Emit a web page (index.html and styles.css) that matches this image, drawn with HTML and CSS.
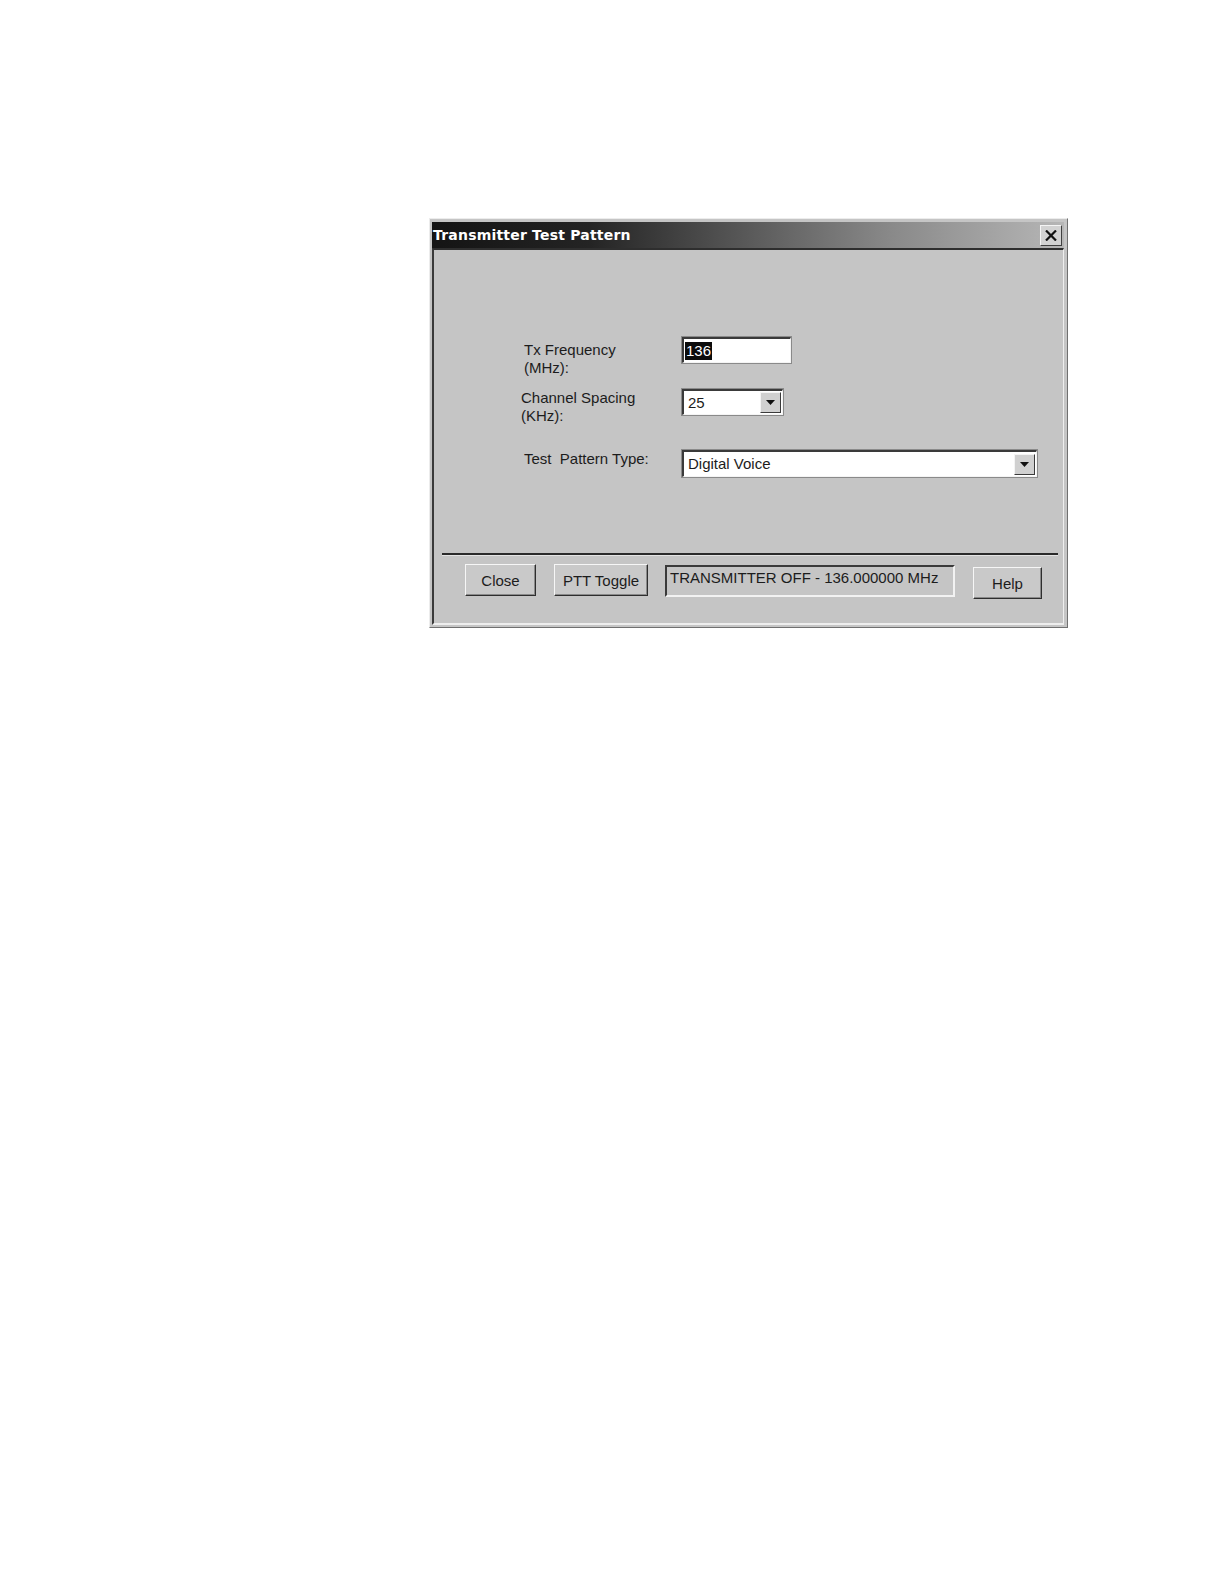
FILE: index.html
```html
<!DOCTYPE html>
<html>
<head>
<meta charset="utf-8">
<title>Transmitter Test Pattern</title>
<link rel="stylesheet" href="styles.css">
</head>
<body>
<div class="dialog">
  <div class="titlebar">
    <span class="title">Transmitter Test Pattern</span>
    <span class="xbtn"><svg width="12" height="11" viewBox="0 0 12 11"><path d="M1 0.5 L11 10.5 M11 0.5 L1 10.5" stroke="#111" stroke-width="2.2"/></svg></span>
  </div>
  <div class="body">
    <div class="form">
      <div class="row row1">
        <div class="label pad">Tx Frequency<br>(MHz):</div>
        <div class="field short"><span class="sel">136</span></div>
      </div>
      <div class="row row2">
        <div class="label">Channel Spacing<br>(KHz):</div>
        <div class="field combo small"><span class="val">25</span><span class="drop"><svg width="9" height="5" viewBox="0 0 9 5"><path d="M0 0 H9 L4.5 5 Z" fill="#111"/></svg></span></div>
      </div>
      <div class="row row3">
        <div class="label pad single">Test&nbsp; Pattern Type:</div>
        <div class="field combo wide"><span class="val">Digital Voice</span><span class="drop"><svg width="9" height="5" viewBox="0 0 9 5"><path d="M0 0 H9 L4.5 5 Z" fill="#111"/></svg></span></div>
      </div>
    </div>
    <div class="sep"></div>
    <div class="buttons">
      <div class="btn b-close">Close</div>
      <div class="btn b-ptt">PTT Toggle</div>
      <div class="status">TRANSMITTER OFF - 136.000000 MHz</div>
      <div class="btn b-help">Help</div>
    </div>
  </div>
</div>
</body>
</html>
```

FILE: styles.css
```css
html, body {
  margin: 0;
  padding: 0;
  background: #ffffff;
}
body {
  font-family: "Liberation Sans", Arial, sans-serif;
  padding-top: 218px;
  padding-left: 429px;
}
.dialog {
  width: 639px;
  height: 410px;
  box-sizing: border-box;
  background: #c5c5c5;
  border: 1px solid;
  border-color: #ececec #707070 #707070 #ececec;
  padding: 3px 3px 2px 2px;
  display: flex;
  flex-direction: column;
}
.titlebar {
  height: 26px;
  flex: none;
  background: linear-gradient(90deg, #141414 0%, #242424 25%, #555 48%, #888 72%, #b6b6b6 100%);
  display: flex;
  align-items: center;
  justify-content: space-between;
  padding: 0 2px 0 1px;
}
.title {
  color: #ffffff;
  font-family: "DejaVu Sans", Verdana, sans-serif;
  font-weight: bold;
  font-size: 14px;
  letter-spacing: 0.2px;
}
.xbtn {
  width: 22px;
  height: 21px;
  box-sizing: border-box;
  background: #d2d2d2;
  border: 1px solid;
  border-color: #f4f4f4 #404040 #404040 #f4f4f4;
  display: flex;
  align-items: center;
  justify-content: center;
}
.body {
  flex: 1;
  border-top: 2px solid #2e2e2e;
  border-left: 2px solid #3a3a3a;
  border-right: 1px solid #eeeeee;
  border-bottom: 2px solid #eeeeee;
  padding-top: 87px;
  color: #1c1c1c;
  font-size: 15px;
}
.form {
  padding-left: 87px;
  display: flex;
  flex-direction: column;
}
.row {
  display: grid;
  grid-template-columns: 161px auto;
  align-items: start;
}
.row1 { margin-bottom: 12px; }
.row2 { margin-bottom: 25px; }
.label {
  line-height: 18px;
}
.label.pad { padding-left: 3px; }
.row1 .label { padding-top: 4px; }
.row3 .label { padding-top: 0; }
.field {
  height: 26px;
  box-sizing: border-box;
  background: #ffffff;
  border-top: 2px solid #3a3a3a;
  border-left: 2px solid #3a3a3a;
  border-bottom: 1px solid #f4f4f4;
  border-right: 1px solid #f4f4f4;
  box-shadow: 0 0 0 1px #8a8a8a;
  display: flex;
  align-items: center;
  line-height: 18px;
}
.short { width: 109px; padding-left: 1px; }
.small { width: 101px; }
.wide { width: 355px; height: 27px; }
.sel {
  background: #0c0c0c;
  color: #ffffff;
  padding: 0 1px 0 1px;
}
.combo { justify-content: space-between; }
.val {
  padding-left: 4px;
}
.drop {
  width: 21px;
  height: 21px;
  box-sizing: border-box;
  margin-right: 1px;
  background: #d0d0d0;
  border: 1px solid;
  border-color: #f4f4f4 #3a3a3a #3a3a3a #f4f4f4;
  display: flex;
  align-items: center;
  justify-content: center;
}
.sep {
  margin: 76px 5px 0 8px;
  height: 2px;
  background: #2a2a2a;
  border-bottom: 1px solid #e4e4e4;
}
.buttons {
  margin-top: 8px;
  padding-left: 31px;
  display: flex;
  align-items: flex-start;
}
.btn {
  height: 32px;
  box-sizing: border-box;
  background: #c9c9c9;
  border: 1px solid;
  border-color: #f6f6f6 #2e2e2e #2e2e2e #f6f6f6;
  box-shadow: inset -1px -1px 0 #8a8a8a;
  display: flex;
  align-items: center;
  justify-content: center;
}
.b-close { width: 71px; }
.b-ptt { width: 94px; margin-left: 18px; }
.b-help { width: 69px; margin-left: 18px; margin-top: 3px; }
.status {
  width: 290px;
  height: 32px;
  box-sizing: border-box;
  margin-left: 17px;
  margin-top: 1px;
  border-top: 2px solid #3a3a3a;
  border-left: 2px solid #3a3a3a;
  border-bottom: 2px solid #f2f2f2;
  border-right: 2px solid #f2f2f2;
  padding: 2px 0 0 3px;
  line-height: 18px;
  white-space: nowrap;
}
```
